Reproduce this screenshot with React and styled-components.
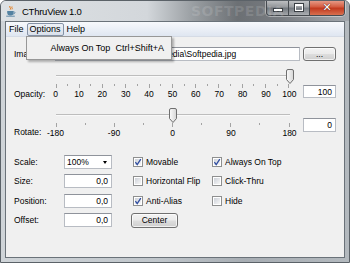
import React from 'react';
import styled, { createGlobalStyle } from 'styled-components';

const GlobalStyle = createGlobalStyle`
  html, body {
    margin: 0;
    padding: 0;
    background: #ffffff;
  }
  body {
    font-family: "Liberation Sans", Arial, sans-serif;
  }
`;

const OPACITY_LABELS = [0, 10, 20, 30, 40, 50, 60, 70, 80, 90, 100];
const ROTATE_LABELS = [-180, -90, 0, 90, 180];

const JavaIcon = () => (
  <svg width="12" height="12" viewBox="0 0 12 12">
    <path d="M5 1 C3.8 2.4 6.4 3 5.2 4.6" fill="none" stroke="#e76f00" strokeWidth="1" />
    <path d="M7 1.5 C6.2 2.6 7.8 3.2 7 4.4" fill="none" stroke="#e76f00" strokeWidth="0.9" />
    <path d="M2.2 6 H8.6 V8 A2.4 2.4 0 0 1 6.2 10.4 H4.6 A2.4 2.4 0 0 1 2.2 8 Z" fill="#5382a1" />
    <path d="M8.6 6.8 C10.4 6.6 10.4 8.8 8.2 9" fill="none" stroke="#5382a1" strokeWidth="0.9" />
    <path d="M1.2 11.2 H9.8" stroke="#5382a1" strokeWidth="0.9" />
  </svg>
);

const ThumbIcon = () => (
  <svg width="8" height="15" viewBox="0 0 8 15">
    <defs>
      <linearGradient id="thumbFill" x1="0" y1="0" x2="1" y2="0">
        <stop offset="0" stopColor="#fbfbfb" />
        <stop offset="1" stopColor="#d6d6d6" />
      </linearGradient>
    </defs>
    <path
      d="M0.5 2 Q0.5 0.5 2 0.5 H6 Q7.5 0.5 7.5 2 V10.5 L4 14.5 L0.5 10.5 Z"
      fill="url(#thumbFill)"
      stroke="#6f6f6f"
    />
  </svg>
);

const CheckIcon = ({ checked }) => (
  <svg width="10" height="10" viewBox="0 0 10 10">
    <defs>
      <linearGradient id="boxFill" x1="0" y1="0" x2="1" y2="1">
        <stop offset="0" stopColor="#cdd1d8" />
        <stop offset="1" stopColor="#f7f7f7" />
      </linearGradient>
    </defs>
    <rect x="0.5" y="0.5" width="9" height="9" fill="#ffffff" stroke="#8e8f8f" />
    <rect x="2" y="2" width="6" height="6" fill="url(#boxFill)" />
    {checked && (
      <path d="M2.4 5.2 L4.2 7.6 L7.8 2.2" fill="none" stroke="#2f4da0" strokeWidth="1.3" />
    )}
  </svg>
);

const Window = styled.div`
  width: 350px;
  height: 263px;
  box-sizing: border-box;
  display: flex;
  flex-direction: column;
  border: 1px solid #5b6268;
  border-radius: 6px 6px 0 0;
  overflow: hidden;
  background: linear-gradient(90deg, #cfd4d8 0%, #c0c6cb 45%, #a7adb3 70%, #b3b9be 100%);
`;

const TitleBar = styled.div`
  position: relative;
  height: 20px;
  display: flex;
  align-items: center;
  padding: 0 4px 0 4px;
  background: linear-gradient(90deg, #dde1e4 0%, #d3d7db 42%, #9a9fa3 55%, #6c7074 68%, #777b80 80%, #a3a8ad 100%);
`;

const TitleText = styled.span`
  margin-left: 5px;
  font-size: 9.5px;
  letter-spacing: -0.25px;
  color: #000;
`;

const Watermark = styled.span`
  position: absolute;
  left: 190px;
  top: 2px;
  font-family: "DejaVu Sans", sans-serif;
  font-weight: bold;
  font-size: 14px;
  letter-spacing: 0.5px;
  color: rgba(255, 255, 255, 0.13);
`;

const CaptionGroup = styled.div`
  display: flex;
  align-self: flex-start;
  margin-left: auto;
  margin-top: -1px;
  height: 15px;
  border: 1px solid #464b50;
  border-top: none;
  border-radius: 0 0 4px 4px;
  overflow: hidden;
  box-shadow: 0 0 0 1px rgba(255, 255, 255, 0.4);
`;

const CaptionButton = styled.div`
  width: ${p => p.$w}px;
  display: flex;
  align-items: center;
  justify-content: center;
  background: ${p =>
    p.$close
      ? 'linear-gradient(#e9a391 0%, #d45d42 45%, #c23a1f 55%, #d8704f 100%)'
      : 'linear-gradient(rgba(255,255,255,0.55) 0%, rgba(255,255,255,0.22) 45%, rgba(90,100,110,0.25) 55%, rgba(255,255,255,0.3) 100%)'};
  & + & {
    border-left: 1px solid #464b50;
  }
`;

const MinGlyph = styled.div`
  width: 8px;
  height: 2px;
  margin-top: 5px;
  background: #fff;
  border: 1px solid #3a3f44;
`;

const MaxGlyph = styled.div`
  width: 6px;
  height: 4px;
  border: 1px solid #fff;
  border-top-width: 2px;
  outline: 1px solid #3a3f44;
`;

const CloseGlyph = styled.span`
  font-family: "DejaVu Sans", sans-serif;
  font-weight: bold;
  font-size: 11px;
  line-height: 11px;
  color: #fff;
  text-shadow: 0 0 1px #5a1a0c, 0 0 1px #5a1a0c;
`;

const Client = styled.div`
  flex: 1;
  margin: 0 4px 4px 4px;
  display: flex;
  flex-direction: column;
  border: 1px solid #6a7279;
`;

const MenuBar = styled.div`
  height: 15px;
  display: flex;
  align-items: center;
  background: linear-gradient(#f7f9fc, #dfe6f1);
  border-bottom: 1px solid #d5dbe5;
  box-sizing: border-box;
`;

const MenuItem = styled.div`
  position: relative;
  height: 11px;
  line-height: 11px;
  padding: 0 2px;
  font-size: 9px;
  color: #000;
  border: 1px solid ${p => (p.$open ? '#8592a6' : 'transparent')};
  border-radius: 2px;
  background: ${p => (p.$open ? 'linear-gradient(#eef1f6, #d9e0ea)' : 'transparent')};
`;

const Popup = styled.div`
  position: absolute;
  left: -2px;
  top: 12px;
  width: 144px;
  padding: 3px 0 1px;
  background: #f0f0f0;
  border: 1px solid #979797;
  box-shadow: 2px 2px 2px rgba(0, 0, 0, 0.28);
  z-index: 2;
`;

const PopupRow = styled.div`
  display: flex;
  height: 18px;
  align-items: center;
  padding-left: 24px;
  font-size: 9px;
  white-space: nowrap;
`;

const PopupLabel = styled.span`
  width: 65px;
`;

const Panel = styled.div`
  flex: 1;
  background: #f0f0f0;
  padding: 10px 8px 0 8px;
  display: flex;
  flex-direction: column;
  font-size: 8.5px;
  color: #000;
`;

const ImageRow = styled.div`
  display: grid;
  grid-template-columns: 38px 1fr 33px;
  column-gap: 3px;
  height: 14px;
  align-items: center;
`;

const Label = styled.span`
  white-space: nowrap;
  line-height: 10px;
`;

const TextField = styled.div`
  box-sizing: border-box;
  height: ${p => p.$h || 14}px;
  width: ${p => (p.$w ? `${p.$w}px` : 'auto')};
  margin-top: ${p => p.$top || 0}px;
  padding: 0 3px;
  display: flex;
  align-items: center;
  justify-content: ${p => (p.$right ? 'flex-end' : 'flex-start')};
  background: #ffffff;
  border: 1px solid #b8bcc3;
  border-top-color: #8f939b;
  overflow: hidden;
  white-space: nowrap;
`;

const ValueField = styled(TextField)`
  margin-left: 9px;
`;

const Button = styled.div`
  box-sizing: border-box;
  height: ${p => p.$h || 14}px;
  width: ${p => (p.$w ? `${p.$w}px` : 'auto')};
  display: flex;
  align-items: center;
  justify-content: center;
  border: 1px solid #707070;
  border-radius: 3px;
  background: linear-gradient(#f3f3f3 0%, #ebebeb 48%, #dddddd 52%, #cfcfcf 100%);
  box-shadow: inset 0 0 0 1px rgba(255, 255, 255, 0.7);
`;

const SliderRow = styled.div`
  display: grid;
  grid-template-columns: 37px 243px 1fr;
  height: 30px;
  margin-top: ${p => p.$gap}px;
`;

const SliderLabel = styled(Label)`
  align-self: end;
  margin-bottom: ${p => p.$bottom || 0}px;
`;

const SliderBox = styled.div`
  padding: 0 4.5px;
  display: flex;
  flex-direction: column;
`;

const Range = styled.div`
  position: relative;
  height: 15px;
`;

const Track = styled.div`
  margin-top: 6px;
  height: 1px;
  background: #bdbdbd;
  border-bottom: 1px solid #f9f9f9;
`;

const Thumb = styled.div`
  position: absolute;
  top: 0;
  width: 8px;
  height: 15px;
  margin-left: -4px;
  line-height: 0;
`;

const Ticks = styled.div`
  height: 4px;
  display: flex;
  justify-content: space-between;
  align-items: flex-start;
`;

const Tick = styled.div`
  width: 1px;
  height: ${p => (p.$major ? 4 : 2)}px;
  background: #a3a3a3;
`;

const TickLabels = styled.div`
  margin-top: 1px;
  height: 10px;
  line-height: 10px;
  display: flex;
  justify-content: space-between;
`;

const TickLabel = styled.div`
  width: 0;
  display: flex;
  justify-content: center;
  white-space: nowrap;
`;

const Form = styled.div`
  display: grid;
  grid-template-columns: 50px 67px 79px 1fr;
  grid-auto-rows: 14px;
  row-gap: 5.4px;
  margin-top: 17px;
  align-items: center;
`;

const Combo = styled(TextField)`
  justify-content: space-between;
  padding: 0 4px 0 2px;
`;

const Arrow = styled.div`
  width: 0;
  height: 0;
  border-left: 2.5px solid transparent;
  border-right: 2.5px solid transparent;
  border-top: 3px solid #000;
  margin-top: 1px;
`;

const Check = styled.div`
  display: flex;
  align-items: center;
  gap: 3px;
  padding-left: 2px;
  white-space: nowrap;
  line-height: 10px;
  svg {
    flex: none;
  }
`;

function Slider({ labels, min, max, value }) {
  const count = (labels.length - 1) * 2 + 1;
  const pct = ((value - min) / (max - min)) * 100;
  return (
    <SliderBox>
      <Range>
        <Track />
        <Thumb style={{ left: `${pct}%` }}>
          <ThumbIcon />
        </Thumb>
      </Range>
      <Ticks>
        {Array.from({ length: count }, (_, i) => (
          <Tick key={i} $major={i % 2 === 0} />
        ))}
      </Ticks>
      <TickLabels>
        {labels.map(l => (
          <TickLabel key={l}>
            <span>{l}</span>
          </TickLabel>
        ))}
      </TickLabels>
    </SliderBox>
  );
}

export default function App() {
  return (
    <>
      <GlobalStyle />
      <Window>
        <TitleBar>
          <JavaIcon />
          <TitleText>CThruView 1.0</TitleText>
          <Watermark>SOFTPEDIA</Watermark>
          <CaptionGroup>
            <CaptionButton $w={21}>
              <MinGlyph />
            </CaptionButton>
            <CaptionButton $w={20}>
              <MaxGlyph />
            </CaptionButton>
            <CaptionButton $w={34} $close>
              <CloseGlyph>✕</CloseGlyph>
            </CaptionButton>
          </CaptionGroup>
        </TitleBar>
        <Client>
          <MenuBar>
            <MenuItem>File</MenuItem>
            <MenuItem $open>
              Options
              <Popup>
                <PopupRow>
                  <PopupLabel>Always On Top</PopupLabel>
                  <span>Ctrl+Shift+A</span>
                </PopupRow>
              </Popup>
            </MenuItem>
            <MenuItem>Help</MenuItem>
          </MenuBar>
          <Panel>
            <ImageRow>
              <Label>Image:</Label>
              <TextField>C:\Documents\Pictures\Softpedia\Softpedia.jpg</TextField>
              <Button>...</Button>
            </ImageRow>

            <SliderRow $gap={8}>
              <SliderLabel $bottom={0}>Opacity:</SliderLabel>
              <Slider labels={OPACITY_LABELS} min={0} max={100} value={100} />
              <ValueField $right $top={16} $h={13}>100</ValueField>
            </SliderRow>

            <SliderRow $gap={9}>
              <SliderLabel $bottom={1}>Rotate:</SliderLabel>
              <Slider labels={ROTATE_LABELS} min={-180} max={180} value={0} />
              <ValueField $right $top={10}>0</ValueField>
            </SliderRow>

            <Form>
              <Label>Scale:</Label>
              <Combo $w={48}>
                <span>100%</span>
                <Arrow />
              </Combo>
              <Check>
                <CheckIcon checked />
                Movable
              </Check>
              <Check>
                <CheckIcon checked />
                Always On Top
              </Check>

              <Label>Size:</Label>
              <TextField $w={48} $right>0,0</TextField>
              <Check>
                <CheckIcon />
                Horizontal Flip
              </Check>
              <Check>
                <CheckIcon />
                Click-Thru
              </Check>

              <Label>Position:</Label>
              <TextField $w={48} $right>0,0</TextField>
              <Check>
                <CheckIcon checked />
                Anti-Alias
              </Check>
              <Check>
                <CheckIcon />
                Hide
              </Check>

              <Label>Offset:</Label>
              <TextField $w={48} $right>0,0</TextField>
              <Button $w={47} $h={15}>Center</Button>
              <span />
            </Form>
          </Panel>
        </Client>
      </Window>
    </>
  );
}
